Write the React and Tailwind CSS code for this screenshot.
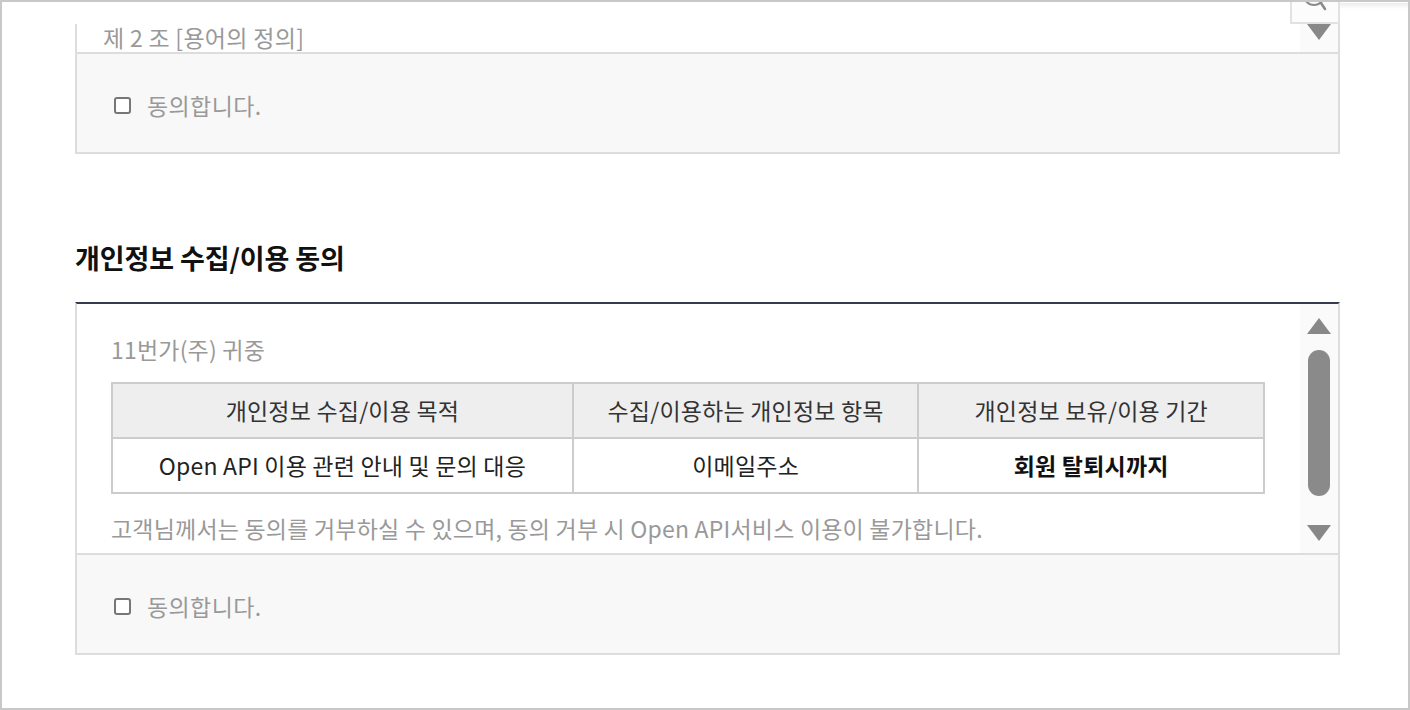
import React from "react";

function Tri({ up }) {
  return (
    <svg width="26" height="18" viewBox="0 0 26 18" className="block">
      {up ? (
        <polygon points="13,1 25,17 1,17" fill="#888" />
      ) : (
        <polygon points="1,1 25,1 13,17" fill="#888" />
      )}
    </svg>
  );
}

function Agree() {
  return (
    <div className="h-[100px] bg-[#f8f8f8] border-t-2 border-[#dddddd] flex items-center pl-[37px] pt-[4px] gap-[16px]">
      <span className="w-[17px] h-[17px] border-2 border-[#777] rounded-[3px] bg-white shrink-0" />
      <span className="text-[23px] leading-[30px] tracking-[0.4px] text-[#999]">동의합니다.</span>
    </div>
  );
}

export default function App() {
  return (
    <div className="w-[1410px] h-[710px] border-2 border-[#c8c8c8] bg-white relative overflow-hidden font-['Noto_Sans_CJK_KR',sans-serif]">
      {/* top fixed strip */}
      <div className="absolute top-0 left-0 right-0 h-[22px] bg-white z-10">
        <div className="absolute left-[1336px] right-0 top-[1px] h-[6px] bg-gradient-to-b from-[#ececec] to-white" />
        <div className="absolute left-[1288px] top-0 w-[50px] h-[22px] border-2 border-t-0 border-[#e2e2e2] bg-[#fcfcfc] overflow-hidden">
          <svg width="50" height="22" viewBox="0 0 50 22" className="block">
            <circle cx="22" cy="-7" r="10" fill="none" stroke="#8a8a8a" strokeWidth="2" />
            <line x1="29" y1="1" x2="33" y2="7" stroke="#8a8a8a" strokeWidth="2.5" strokeLinecap="round" />
          </svg>
        </div>
      </div>

      <div className="pl-[73px] pr-[68px] pt-[22px]">
        {/* first box (scrolled) */}
        <div className="border-x-2 border-b-2 border-[#dddddd]">
          <div className="h-[28px] flex">
            <div className="flex-1 pl-[26px] text-[23px] leading-[26px] tracking-[0.3px] text-[#999]">
              제 2 조 [용어의 정의]
            </div>
            <div className="w-[38px] bg-[#fafafa] flex flex-col items-center">
              <div className="-mt-[1px]">
                <Tri />
              </div>
            </div>
          </div>
          <Agree />
        </div>

        <h2 className="mt-[87px] text-[27px] leading-[34px] font-bold text-[#111] tracking-[-0.1px]">
          개인정보 수집/이용 동의
        </h2>

        <div className="mt-[27px] border-t-2 border-t-[#353b4c] border-x-2 border-b-2 border-x-[#dddddd] border-b-[#dddddd]">
          <div className="h-[249px] flex">
            <div className="flex-1 pl-[34px] pr-[35px] pt-[30px]">
              <div className="text-[23px] leading-[30px] tracking-[0.2px] text-[#999]">11번가(주) 귀중</div>
              <table className="mt-[18px] w-full border-collapse text-[23px] text-center tracking-[0.2px]">
                <tbody>
                  <tr className="bg-[#eeeeee] text-[#333]">
                    <td className="w-[40%] h-[55px] border-2 border-[#cccccc] p-0">개인정보 수집/이용 목적</td>
                    <td className="w-[30%] h-[55px] border-2 border-[#cccccc] p-0">수집/이용하는 개인정보 항목</td>
                    <td className="w-[30%] h-[55px] border-2 border-[#cccccc] p-0">개인정보 보유/이용 기간</td>
                  </tr>
                  <tr className="bg-white text-[#222]">
                    <td className="h-[55px] border-2 border-[#cccccc] p-0">Open API 이용 관련 안내 및 문의 대응</td>
                    <td className="h-[55px] border-2 border-[#cccccc] p-0">이메일주소</td>
                    <td className="h-[55px] border-2 border-[#cccccc] p-0 font-bold text-[#111]">회원 탈퇴시까지</td>
                  </tr>
                </tbody>
              </table>
              <div className="mt-[19px] text-[23px] leading-[30px] tracking-[0.2px] text-[#999]">
                고객님께서는 동의를 거부하실 수 있으며, 동의 거부 시 Open API서비스 이용이 불가합니다.
              </div>
            </div>
            <div className="w-[38px] bg-[#fafafa] flex flex-col items-center">
              <div className="mt-[13px]">
                <Tri up />
              </div>
              <div className="mt-[15px] w-[22px] h-[146px] rounded-full bg-[#8a8a8a]" />
              <div className="mt-[28px]">
                <Tri />
              </div>
            </div>
          </div>
          <Agree />
        </div>
      </div>
    </div>
  );
}
